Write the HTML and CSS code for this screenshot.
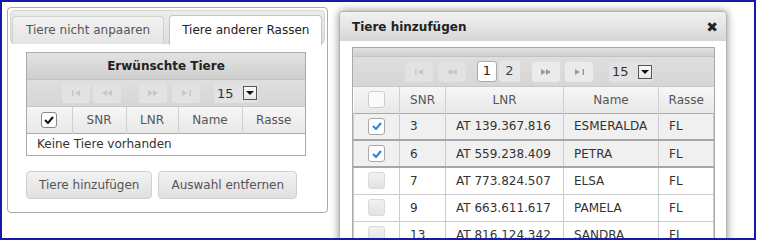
FILE: index.html
```html
<!DOCTYPE html>
<html lang="de">
<head>
    <meta charset="UTF-8">
    <title>Tiere anpaaren</title>
    <link rel="stylesheet" href="styles.css">
</head>
<body>
    <div class="frame">
        <div class="tabs">
            <ul class="tab-nav">
                <li class="tab">Tiere nicht anpaaren</li>
                <li class="tab active">Tiere anderer Rassen</li>
            </ul>
            <div class="tab-panel">
                <div class="grid grid-small">
                    <div class="grid-caption">Erwünschte Tiere</div>
                    <div class="pager">
                        <span class="pg-btn"><svg width="9" height="6" viewBox="0 0 9 6"><rect x="0" y="0" width="1.5" height="6"/><polygon points="8,0 8,6 3,3"/></svg></span>
                        <span class="pg-btn"><svg width="10" height="6" viewBox="0 0 10 6"><polygon points="5,0 5,6 0,3"/><polygon points="10,0 10,6 5,3"/></svg></span>
                        <span class="pg-pages"></span>
                        <span class="pg-btn"><svg width="10" height="6" viewBox="0 0 10 6"><polygon points="0,0 0,6 5,3"/><polygon points="5,0 5,6 10,3"/></svg></span>
                        <span class="pg-btn"><svg width="9" height="6" viewBox="0 0 9 6"><polygon points="0,0 0,6 5,3"/><rect x="7.5" y="0" width="1.5" height="6"/></svg></span>
                        <span class="pg-select">15<span class="pg-arrow"></span></span>
                    </div>
                    <table>
                        <thead>
                            <tr>
                                <th class="col-check"><span class="cb cb-dark"><svg width="10" height="8" viewBox="0 0 10 8"><polyline points="1,4 4,7 9,1"/></svg></span></th>
                                <th>SNR</th>
                                <th>LNR</th>
                                <th>Name</th>
                                <th>Rasse</th>
                            </tr>
                        </thead>
                        <tbody>
                            <tr><td colspan="5" class="empty">Keine Tiere vorhanden</td></tr>
                        </tbody>
                    </table>
                </div>
                <div class="actions">
                    <button class="btn">Tiere hinzufügen</button>
                    <button class="btn">Auswahl entfernen</button>
                </div>
            </div>
        </div>

        <div class="dialog">
            <div class="dialog-title">
                <span>Tiere hinzufügen</span>
                <span class="close">✖</span>
            </div>
            <div class="dialog-body">
                <div class="grid grid-large">
                    <div class="grid-caption thin"></div>
                    <div class="pager">
                        <span class="pg-btn"><svg width="9" height="6" viewBox="0 0 9 6"><rect x="0" y="0" width="1.5" height="6"/><polygon points="8,0 8,6 3,3"/></svg></span>
                        <span class="pg-btn"><svg width="10" height="6" viewBox="0 0 10 6"><polygon points="5,0 5,6 0,3"/><polygon points="10,0 10,6 5,3"/></svg></span>
                        <span class="pg-page current">1</span>
                        <span class="pg-page">2</span>
                        <span class="pg-btn on"><svg width="10" height="6" viewBox="0 0 10 6"><polygon points="0,0 0,6 5,3"/><polygon points="5,0 5,6 10,3"/></svg></span>
                        <span class="pg-btn on"><svg width="9" height="6" viewBox="0 0 9 6"><polygon points="0,0 0,6 5,3"/><rect x="7.5" y="0" width="1.5" height="6"/></svg></span>
                        <span class="pg-select">15<span class="pg-arrow"></span></span>
                    </div>
                    <table>
                        <thead>
                            <tr>
                                <th class="col-check"><span class="cb cb-empty"></span></th>
                                <th>SNR</th>
                                <th>LNR</th>
                                <th>Name</th>
                                <th>Rasse</th>
                            </tr>
                        </thead>
                        <tbody>
                            <tr class="selected">
                                <td class="col-check"><span class="cb cb-on"><svg width="10" height="8" viewBox="0 0 10 8"><polyline points="1,4 4,7 9,1"/></svg></span></td>
                                <td>3</td><td>AT 139.367.816</td><td>ESMERALDA</td><td>FL</td>
                            </tr>
                            <tr class="selected">
                                <td class="col-check"><span class="cb cb-on"><svg width="10" height="8" viewBox="0 0 10 8"><polyline points="1,4 4,7 9,1"/></svg></span></td>
                                <td>6</td><td>AT 559.238.409</td><td>PETRA</td><td>FL</td>
                            </tr>
                            <tr>
                                <td class="col-check"><span class="cb"></span></td>
                                <td>7</td><td>AT 773.824.507</td><td>ELSA</td><td>FL</td>
                            </tr>
                            <tr>
                                <td class="col-check"><span class="cb"></span></td>
                                <td>9</td><td>AT 663.611.617</td><td>PAMELA</td><td>FL</td>
                            </tr>
                            <tr>
                                <td class="col-check"><span class="cb"></span></td>
                                <td>13</td><td>AT 816.124.342</td><td>SANDRA</td><td>FL</td>
                            </tr>
                        </tbody>
                    </table>
                </div>
            </div>
        </div>
    </div>
</body>
</html>
```

FILE: styles.css
```css
* {
    margin: 0;
    padding: 0;
    box-sizing: border-box;
}

body {
    font-family: 'DejaVu Sans', Verdana, sans-serif;
    font-size: 12px;
    color: #333;
    background-color: #fff;
}

/* Outer blue frame */
.frame {
    position: relative;
    width: 756px;
    height: 240px;
    border: 2px solid #1a1aa8;
    padding: 5px;
    overflow: hidden;
    background-color: #fff;
}

/* Tabs */
.tabs {
    width: 321px;
    height: 206px;
    border: 1px solid #aaa;
    border-radius: 4px;
    padding: 2px;
}

.tab-nav {
    list-style: none;
    display: flex;
    gap: 5px;
    height: 34px;
    padding: 4px 1px 0;
    border: 1px solid #d6d6d6;
    border-radius: 4px;
    background: linear-gradient(#ececec, #dedede);
}

.tab {
    flex-shrink: 0;
    white-space: nowrap;
    height: 28px;
    padding: 0 13px;
    line-height: 26px;
    color: #555;
    border: 1px solid #d0d0d0;
    border-bottom: none;
    border-radius: 4px 4px 0 0;
    background: linear-gradient(#f2f2f2, #e4e4e4);
    margin-top: 1px;
}

.tab.active {
    margin-top: 0;
    height: 30px;
    padding: 0 12px;
    line-height: 28px;
    color: #222;
    background: #fff;
    border-color: #c4c4c4;
}

.tab-panel {
    padding: 8px 16px 0;
}

/* Grid */
.grid {
    border: 1px solid #aaa;
}

.grid-small {
    width: 280px;
}

.grid-large {
    width: 363px;
}

.grid-caption {
    height: 27px;
    line-height: 26px;
    text-align: center;
    font-weight: bold;
    color: #222;
    background: linear-gradient(#e2e2e2, #cfcfcf);
    border-bottom: 1px solid #c2c2c2;
}

.grid-caption.thin {
    height: 9px;
}

.pager {
    display: flex;
    align-items: center;
    height: 27px;
    padding-left: 35px;
    background: linear-gradient(#dedede, #d6d6d6);
    border-bottom: 1px solid #c8c8c8;
}

.grid-large .pager {
    height: 30px;
    padding-left: 52px;
}

.pg-btn {
    display: flex;
    align-items: center;
    justify-content: center;
    width: 28px;
    height: 20px;
    margin-right: 3px;
    border-radius: 3px;
    background-color: #e2e2e2;
}

.pg-btn svg {
    fill: #c6c6c6;
}

.pg-btn.on {
    background-color: #ebebeb;
}

.pg-btn.on svg {
    fill: #9a9a9a;
}

.pg-pages {
    width: 13px;
}

.grid-small .pg-btn:nth-child(4) {
    margin-left: 2px;
    margin-right: 5px;
}

.grid-small .pg-btn:nth-child(5) {
    margin-right: 14px;
}

.grid-large .pg-btn:nth-child(2) {
    margin-left: 2px;
    margin-right: 11px;
}

.grid-large .pg-btn:nth-child(5) {
    margin-left: 10px;
    margin-right: 5px;
}

.grid-large .pg-btn:nth-child(6) {
    margin-right: 16px;
}

.pg-page {
    width: 21px;
    height: 21px;
    margin-right: 2px;
    line-height: 20px;
    text-align: center;
    font-size: 13px;
    color: #444;
    border-radius: 3px;
    background-color: #e6e6e6;
}

.pg-page.current {
    width: 20px;
    background-color: #fff;
    border: 1px solid #aaa;
    line-height: 18px;
    color: #222;
}

.pg-select {
    display: flex;
    align-items: center;
    width: 44px;
    height: 20px;
    padding-left: 3px;
    font-size: 13px;
    color: #333;
    border-radius: 2px;
    background-color: #e2e2e2;
}

.pg-arrow {
    position: relative;
    margin-left: auto;
    margin-right: 1px;
    width: 14px;
    height: 14px;
    border: 1px solid #555;
    background: linear-gradient(#fafafa, #e6e6e6);
}

.pg-arrow::after {
    content: "";
    position: absolute;
    left: 2px;
    top: 4px;
    border-left: 4px solid transparent;
    border-right: 4px solid transparent;
    border-top: 4px solid #111;
}

table {
    width: 100%;
    border-collapse: collapse;
    table-layout: fixed;
}

th {
    height: 26px;
    font-weight: normal;
    color: #555;
    text-align: center;
    border-left: 1px solid #d0d0d0;
    background: linear-gradient(#f6f6f6, #e8e8e8);
}

th:first-child {
    border-left: none;
}

.grid-small th:nth-child(1) { width: 45px; }
.grid-small th:nth-child(2) { width: 54px; }
.grid-small th:nth-child(3) { width: 52px; }
.grid-small th:nth-child(4) { width: 64px; }

.grid-large th:nth-child(1) { width: 46px; }
.grid-large th:nth-child(2) { width: 46px; }
.grid-large th:nth-child(3) { width: 118px; }
.grid-large th:nth-child(4) { width: 95px; }

td {
    height: 27px;
    padding-left: 10px;
    color: #333;
    border: 1px solid #ccc;
    white-space: nowrap;
    overflow: hidden;
}

td.empty {
    height: 22px;
    padding-left: 10px;
    border: none;
    border-top: 1px solid #ccc;
}

td.col-check {
    padding-left: 0;
    text-align: center;
}

tbody tr:first-child td {
    border-top: 1px solid #aaa;
}

tr.selected td {
    background-color: #f0f0f0;
    border-top: 1px solid #a6a6a6;
    border-bottom: 2px solid #a6a6a6;
}

/* Checkboxes */
.cb {
    display: inline-flex;
    align-items: center;
    justify-content: center;
    width: 17px;
    height: 17px;
    vertical-align: middle;
    border: 1px solid #dadada;
    border-radius: 3px;
    background: linear-gradient(#f2f2f2, #e2e2e2);
}

.cb svg {
    fill: none;
    stroke-width: 2;
}

.cb-empty {
    background: #fafafa;
    border-color: #cdcdcd;
}

.cb-on {
    background: #fff;
    border-color: #a8a8a8;
}

.cb-on svg {
    stroke: #2e7fd9;
}

.cb-dark {
    width: 16px;
    height: 16px;
    background: #fff;
    border-color: #888;
}

.cb-dark svg {
    stroke: #111;
}

/* Buttons */
.actions {
    display: flex;
    gap: 6px;
    margin-top: 15px;
}

.btn {
    height: 28px;
    padding: 0 12px;
    font-family: inherit;
    font-size: 12px;
    color: #555;
    border: 1px solid #d0d0d0;
    border-radius: 4px;
    background: linear-gradient(#f2f2f2, #e0e0e0);
}

/* Dialog */
.dialog {
    position: absolute;
    left: 337px;
    top: 9px;
    width: 388px;
    height: 260px;
    border: 1px solid #b4b4b4;
    border-radius: 4px 4px 0 0;
    background-color: #fff;
    box-shadow: 0 0 8px rgba(0, 0, 0, 0.45);
}

.dialog-title {
    display: flex;
    justify-content: space-between;
    align-items: center;
    height: 29px;
    padding: 0 8px 0 12px;
    font-weight: bold;
    font-size: 12px;
    color: #222;
    border-radius: 4px 4px 0 0;
    background: linear-gradient(#f2f2f2, #d6d6d6);
}

.close {
    font-size: 14px;
    color: #222;
}

.dialog-body {
    padding: 6px 12px;
}
```
